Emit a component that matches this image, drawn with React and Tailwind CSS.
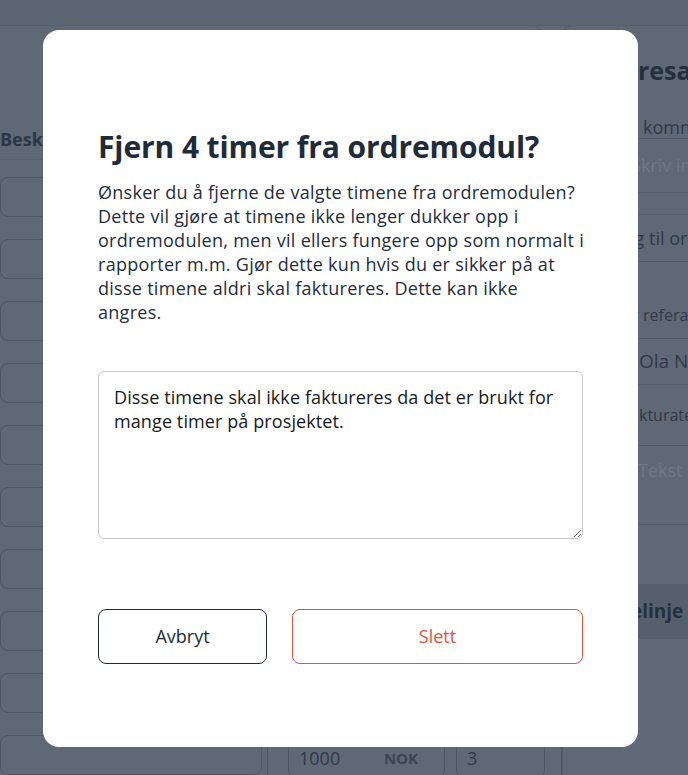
import { useState } from "react"

const rows = [0, 1, 2, 3, 4, 5, 6, 7, 8, 9]

// text whose first part is hidden under the modal: prefix hangs to the left of the anchor
function Cut({ pre, rest }) {
    return (
        <span className="relative whitespace-nowrap">
            <span className="absolute right-full whitespace-pre">{pre}</span>
            {rest}
        </span>
    )
}

function BackgroundPage() {
    return (
        <div className="w-[688px] h-[775px] overflow-hidden bg-[#5f6975] text-[#2b3746]">
            <div className="h-[25px] bg-[#5c6672]" />
            <div className="flex h-[750px] border-t border-[#545e6a]">
                {/* left table column */}
                <div className="w-[562px] shrink-0 flex flex-col">
                    <div className="h-[95px] border-r border-[#545e6a] rounded-tr-[10px] w-[543px]" />
                    <div className="h-[40px] flex items-center font-bold text-[18px] border-b border-[#59636f]">
                        Besk
                    </div>
                    <div className="flex flex-col gap-[22px] pt-[17px]">
                        {rows.map((r) => (
                            <div
                                key={r}
                                className="h-[40px] w-[262px] rounded-[8px] border border-[#4d5764]"
                            />
                        ))}
                    </div>
                </div>
                {/* right panel */}
                <div className="flex-1 min-w-0 overflow-hidden whitespace-nowrap flex flex-col border-l border-t border-[#545e6a] rounded-tl-[10px] mt-[-1px] text-[18px] text-[#2f3a48]">
                    <div className="h-[90px] flex items-center pl-[75px]">
                        <span className="font-bold text-[25px] text-[#24303e]">
                            <Cut pre="Ord" rest="resammendrag" />
                        </span>
                    </div>
                    <div className="h-[22px] flex items-center pl-[80px]">
                        <Cut pre={"Intern\u00a0"} rest="kommentar" />
                    </div>
                    <div className="h-[55px] border-y border-[#545e6a] flex items-center pl-[78px] text-[#6e7884]">
                        <Cut pre="S" rest="kriv inn kommentar" />
                    </div>
                    <div className="h-[21px]" />
                    <div className="h-[48px] border-y border-[#545e6a] flex items-center pl-[86px]">
                        <Cut pre={"Legg\u00a0"} rest="til ordre" />
                    </div>
                    <div className="h-[40px]" />
                    <div className="h-[26px] flex items-center pl-[80px] text-[16px]">
                        <Cut pre={"Vår\u00a0"} rest="referanse" />
                    </div>
                    <div className="h-[10px]" />
                    <div className="h-[47px] border-y border-[#545e6a] flex items-center pl-[76px] text-[19px]">
                        Ola Nordmann
                    </div>
                    <div className="h-[60px] flex items-center pl-[76px] text-[16px]">
                        <Cut pre="Fa" rest="kturatekst" />
                    </div>
                    <div className="h-[80px] border-y border-[#545e6a] pt-[11px] pl-[75px] text-[#6e7884]">
                        Tekst som vises
                    </div>
                    <div className="h-[59px]" />
                    <div className="h-[55px] bg-[#56606c] flex items-center pl-[68px] font-bold text-[19px] text-[#24303e]">
                        <Cut pre="Ordr" rest="elinje" />
                    </div>
                </div>
            </div>
            {/* bottom inputs row */}
            <div className="absolute left-0 top-[738px] w-[688px] h-[40px] flex">
                <div className="w-[268px] border-r border-[#4d5764]" />
                <div className="ml-[20px] w-[157px] h-[40px] rounded-[8px] border border-[#4d5764] flex items-center justify-between px-[10px] text-[18px] text-[#2f3a48]">
                    <span>1000</span>
                    <span className="font-bold text-[15px] text-[#3a4553] pr-[16px]">NOK</span>
                </div>
                <div className="ml-[11px] w-[89px] h-[40px] rounded-[8px] border border-[#4d5764] flex items-center px-[10px] text-[18px] text-[#2f3a48]">
                    3
                </div>
                <div className="w-[17px] border-r border-[#4d5764]" />
            </div>
        </div>
    )
}

const bodyLines = [
    "Ønsker du å fjerne de valgte timene fra ordremodulen?",
    "Dette vil gjøre at timene ikke lenger dukker opp i",
    "ordremodulen, men vil ellers fungere opp som normalt i",
    "rapporter m.m. Gjør dette kun hvis du er sikker på at",
    "disse timene aldri skal faktureres. Dette kan ikke",
    "angres.",
]

export default function App() {
    const [note, setNote] = useState(
        "Disse timene skal ikke faktureres da det er brukt for mange timer på prosjektet."
    )

    return (
        <div
            className="relative w-[688px] h-[775px] overflow-hidden"
            style={{ fontFamily: "'Open Sans', 'Noto Sans', sans-serif" }}
        >
            <BackgroundPage />

            <div className="absolute left-[43px] top-[30px] w-[595px] h-[717px] bg-white rounded-[16px] px-[55px] pt-[99px] flex flex-col">
                <h1 className="text-[30px] leading-[36px] font-bold text-[#1e2b3b] tracking-[-0.1px]">
                    Fjern 4 timer fra ordremodul?
                </h1>

                <p className="mt-[15px] text-[18px] leading-[24px] tracking-[0.28px] text-[#1f2d3d]">
                    {bodyLines.map((l) => (
                        <span key={l} className="block whitespace-nowrap">
                            {l}
                        </span>
                    ))}
                </p>

                <textarea
                    value={note}
                    onChange={(e) => setNote(e.target.value)}
                    className="mt-[47px] w-full h-[168px] rounded-[6px] border border-[#c6c9cd] px-[15px] py-[13px] text-[18px] leading-[24px] tracking-[0.1px] text-[#151a20] outline-none resize-y"
                />

                <div className="mt-[70px] flex gap-[25px]">
                    <button className="w-[169px] h-[55px] rounded-[8px] border-[1.5px] border-[#1e2b3b] text-[18px] text-[#1e2b3b]">
                        Avbryt
                    </button>
                    <button className="flex-1 h-[55px] rounded-[8px] border-[1.5px] border-[#e0553f] text-[18px] text-[#e0553f]">
                        Slett
                    </button>
                </div>
            </div>
        </div>
    )
}
